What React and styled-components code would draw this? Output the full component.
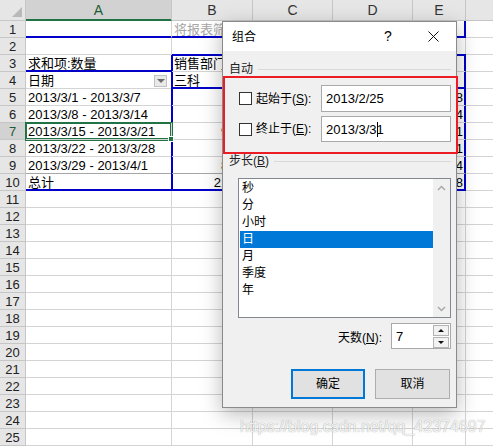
import React from 'react';
import styled, { createGlobalStyle } from 'styled-components';

const BLUE = '#0000c8';
const GREEN = '#217346';
const GRID = '#d4d4d4';

const GlobalStyle = createGlobalStyle`
  html, body {
    margin: 0;
    padding: 0;
    background: #fff;
  }
  body {
    font-family: "Liberation Sans", "Noto Sans CJK SC", sans-serif;
  }
`;

const Screen = styled.div`
  position: relative;
  width: 493px;
  height: 448px;
  overflow: hidden;
  background: #fff;
`;

/* ---------- worksheet ---------- */

const Sheet = styled.div`
  display: grid;
  grid-template-columns: 26px 146px 81px 80px 80px 53px 80px;
  grid-template-rows: 21px repeat(25, 17px);
  font-size: 13px;
  color: #000;
`;

const Corner = styled.div`
  position: relative;
  box-sizing: border-box;
  background: #e6e6e6;
  border-right: 1px solid #c6c6c6;
  border-bottom: 1px solid #c6c6c6;

  &::after {
    content: '';
    position: absolute;
    right: 3px;
    bottom: 3px;
    border-left: 10px solid transparent;
    border-bottom: 10px solid #b9b9b9;
  }
`;

const ColHead = styled.div`
  box-sizing: border-box;
  background: ${(p) => (p.$sel ? '#d2d2d2' : '#e6e6e6')};
  border-right: 1px solid #c6c6c6;
  border-bottom: 1px solid ${(p) => (p.$sel ? GREEN : '#c6c6c6')};
  ${(p) => p.$sel && `box-shadow: inset 0 -1px 0 ${GREEN};`}
  color: ${(p) => (p.$sel ? '#1d5d33' : '#333')};
  font-size: 14px;
  line-height: 20px;
  text-align: center;
`;

const RowHead = styled.div`
  box-sizing: border-box;
  background: ${(p) => (p.$sel ? '#d2d2d2' : '#e6e6e6')};
  border-right: 1px solid ${(p) => (p.$sel ? GREEN : '#c6c6c6')};
  border-bottom: 1px solid #c6c6c6;
  color: ${(p) => (p.$sel ? '#1d5d33' : '#222')};
  font-size: 13px;
  line-height: 17px;
  text-align: center;
`;

const edgeShadows = ({ $t, $r, $b, $l, $active }) => {
  const list = [];
  if ($active) list.push(`0 0 0 1px ${GREEN}`, `inset 0 0 0 1px ${GREEN}`);
  if ($t) list.push(`0 -1px 0 ${BLUE}`, `inset 0 1px 0 ${BLUE}`);
  if ($b) list.push(`inset 0 -1px 0 ${BLUE}`);
  if ($l) list.push(`-1px 0 0 ${BLUE}`, `inset 1px 0 0 ${BLUE}`);
  if ($r) list.push(`inset -1px 0 0 ${BLUE}`);
  return list.length ? `box-shadow: ${list.join(', ')};` : '';
};

const Cell = styled.div`
  position: relative;
  box-sizing: border-box;
  display: flex;
  align-items: flex-start;
  justify-content: ${(p) => (p.$num ? 'flex-end' : 'space-between')};
  padding: 0 2px;
  border-right: 1px solid ${(p) => (p.$r ? BLUE : GRID)};
  border-bottom: 1px solid ${(p) => (p.$b ? BLUE : p.$rule ? '#a6a6a6' : GRID)};
  color: ${(p) => (p.$muted ? '#a6a6a6' : '#000')};
  line-height: 17px;
  white-space: nowrap;
  z-index: ${(p) => (p.$active ? 2 : 'auto')};
  ${edgeShadows}
`;

const FilterButton = styled.span`
  box-sizing: border-box;
  width: 13px;
  height: 12px;
  margin-top: 3px;
  margin-right: 2px;
  background: #e9e9e9;
  border: 1px solid #c2c2c2;
  display: flex;
  align-items: center;
  justify-content: center;

  &::after {
    content: '';
    border-left: 4px solid transparent;
    border-right: 4px solid transparent;
    border-top: 4px solid #6d6d6d;
  }
`;

const FillHandle = styled.span`
  position: absolute;
  right: -3px;
  bottom: -3px;
  width: 4px;
  height: 4px;
  background: ${GREEN};
  border: 1px solid #fff;
`;

/* ---------- dialog ---------- */

const Dialog = styled.div`
  position: absolute;
  left: 222px;
  top: 21px;
  width: 235px;
  box-sizing: border-box;
  border: 1px solid #8a8a8a;
  background: #f0f0f0;
  box-shadow: 0 6px 20px rgba(0, 0, 0, 0.28);
  font-size: 12px;
  color: #000;
  z-index: 5;
`;

const TitleBar = styled.div`
  display: flex;
  align-items: center;
  height: 29px;
  padding-left: 9px;
  background: #fff;
`;

const Title = styled.div`
  flex: 1;
  line-height: 14px;
`;

const HelpButton = styled.div`
  width: 30px;
  margin-right: 7px;
  font-size: 14px;
  line-height: 29px;
  text-align: center;
`;

const CloseButton = styled.div`
  width: 46px;
  height: 29px;
  display: flex;
  align-items: center;
  justify-content: center;
`;

const Body = styled.div`
  padding: 11px 5px 8px 6px;
`;

const Heading = styled.div`
  display: flex;
  align-items: center;
  gap: 5px;
  height: 14px;
  line-height: 14px;
  color: #222;

  &::after {
    content: '';
    flex: 1;
    height: 1px;
    background: #d9d9d9;
  }
`;

const Callout = styled.div`
  margin: 0 -7px 0 -6px;
  padding: 7px 5px 10px 14px;
  border: 2px solid #ec1c24;
  display: flex;
  flex-direction: column;
  gap: 4px;
`;

const FieldRow = styled.div`
  display: flex;
  align-items: center;
`;

const CheckLabel = styled.label`
  flex: 1;
  display: flex;
  align-items: center;
  gap: 4px;
  line-height: 14px;
`;

const CheckBox = styled.span`
  box-sizing: border-box;
  width: 13px;
  height: 13px;
  border: 1px solid #333;
  background: #fff;
`;

const TextBox = styled.div`
  box-sizing: border-box;
  width: 130px;
  height: ${(p) => p.$h}px;
  padding-left: 4px;
  border: 1px solid #a9a9a9;
  background: #fff;
  display: flex;
  align-items: center;
  font-size: 13px;
`;

const Caret = styled.span`
  display: inline-block;
  width: 1px;
  height: 15px;
  margin: 0 -1px 0 0;
  background: #000;
`;

const ListBox = styled.div`
  margin: 10px 0 0 9px;
  height: 140px;
  box-sizing: border-box;
  border: 1px solid #828790;
  background: #fff;
  display: flex;
`;

const Options = styled.div`
  flex: 1;
  padding: 1px 0 0 1px;
`;

const Option = styled.div`
  height: 17px;
  line-height: 17px;
  padding-left: 2px;
  background: ${(p) => (p.$sel ? '#0078d7' : 'transparent')};
  color: ${(p) => (p.$sel ? '#fff' : '#000')};
`;

const ScrollTrack = styled.div`
  width: 17px;
  background: #f0f0f0;
  display: flex;
  flex-direction: column;
  justify-content: space-between;
`;

const ScrollArrow = styled.div`
  height: 17px;
  display: flex;
  align-items: center;
  justify-content: center;
`;

const DaysRow = styled.div`
  margin-top: 5px;
  display: flex;
  align-items: center;
  justify-content: flex-end;
  gap: 9px;
`;

const SpinBox = styled.div`
  box-sizing: border-box;
  width: 60px;
  height: 26px;
  border: 1px solid #a9a9a9;
  background: #fff;
  display: flex;
  align-items: center;
  justify-content: space-between;
  padding: 0 1px 0 4px;
  font-size: 13px;
`;

const SpinButtons = styled.div`
  display: flex;
  flex-direction: column;
  gap: 1px;
`;

const SpinButton = styled.div`
  box-sizing: border-box;
  width: 16px;
  height: 11px;
  border: 1px solid #b4b4b4;
  background: #f2f2f2;
  display: flex;
  align-items: center;
  justify-content: center;

  &::after {
    content: '';
    border-left: 3px solid transparent;
    border-right: 3px solid transparent;
    ${(p) => (p.$down ? 'border-top: 3px solid #111;' : 'border-bottom: 3px solid #111;')}
  }
`;

const ButtonRow = styled.div`
  margin: 20px 1px 0 0;
  display: flex;
  justify-content: flex-end;
  gap: 10px;
`;

const Button = styled.div`
  box-sizing: border-box;
  width: ${(p) => (p.$primary ? 74 : 75)}px;
  height: 30px;
  border: ${(p) => (p.$primary ? '2px solid #0078d7' : '1px solid #adadad')};
  background: #e1e1e1;
  display: flex;
  align-items: center;
  justify-content: center;
  line-height: 14px;
`;

const Watermark = styled.div`
  position: absolute;
  left: 240px;
  top: 418px;
  font-size: 16px;
  line-height: 18px;
  color: rgba(255, 255, 255, 0.9);
  text-shadow: 0 0 1px rgba(0, 0, 0, 0.45);
  white-space: nowrap;
  z-index: 6;
`;

/* ---------- data ---------- */

const COLS = ['A', 'B', 'C', 'D', 'E', ''];

const text = {
  '1-1': '将报表筛选字段拖至此处',
  '3-0': '求和项:数量',
  '3-1': '销售部门',
  '4-0': '日期',
  '4-1': '三科',
  '4-2': '四科',
  '4-3': '五科',
  '4-4': '总计',
  '5-0': '2013/3/1 - 2013/3/7',
  '6-0': '2013/3/8 - 2013/3/14',
  '7-0': '2013/3/15 - 2013/3/21',
  '8-0': '2013/3/22 - 2013/3/28',
  '9-0': '2013/3/29 - 2013/4/1',
  '10-0': '总计',
};

const numbers = {
  5: ['986', '210', '312', '1508'],
  6: ['975', '205', '294', '1474'],
  7: ['9512', '1320', '1269', '12101'],
  8: ['968', '188', '205', '1361'],
  9: ['8900', '1450', '1304', '11654'],
  10: ['21341', '3373', '3384', '28098'],
};

const edgesFor = (r, c) => {
  const e = {};
  if (r === 1 && c <= 4) e.$b = true;
  if ((r === 1 || (r >= 3 && r <= 10)) && c === 4) e.$r = true;
  if (r === 3 && c === 0) e.$b = true;
  if (r === 3 && c >= 1 && c <= 4) e.$t = true;
  if (r >= 3 && r <= 10 && c === 1) e.$l = true;
  if (r === 4 && c >= 1 && c <= 4) e.$b = true;
  if (r === 10 && c <= 4) e.$b = true;
  if (r === 9 && c <= 4) e.$rule = true;
  return e;
};

const steps = ['秒', '分', '小时', '日', '月', '季度', '年'];

const ChevronUp = () => (
  <svg width="9" height="6" viewBox="0 0 9 6">
    <path d="M1 5 L4.5 1.5 L8 5" fill="none" stroke="#a6a6a6" strokeWidth="1.4" />
  </svg>
);

const ChevronDown = () => (
  <svg width="9" height="6" viewBox="0 0 9 6">
    <path d="M1 1 L4.5 4.5 L8 1" fill="none" stroke="#a6a6a6" strokeWidth="1.4" />
  </svg>
);

const Worksheet = () => (
  <Sheet>
    <Corner />
    {COLS.map((c, i) => (
      <ColHead key={i} $sel={c === 'A'}>
        {c}
      </ColHead>
    ))}
    {Array.from({ length: 25 }, (_, i) => i + 1).map((r) => (
      <React.Fragment key={r}>
        <RowHead $sel={r === 7}>{r}</RowHead>
        {COLS.map((_, c) => {
          const num = numbers[r] && c >= 1 && c <= 4 ? numbers[r][c - 1] : null;
          const active = r === 7 && c === 0;
          return (
            <Cell
              key={c}
              {...edgesFor(r, c)}
              $num={!!num}
              $muted={r === 1}
              $active={active}
            >
              {num || text[`${r}-${c}`] || ''}
              {r === 4 && c === 0 && <FilterButton />}
              {active && <FillHandle />}
            </Cell>
          );
        })}
      </React.Fragment>
    ))}
  </Sheet>
);

const GroupDialog = () => (
  <Dialog>
    <TitleBar>
      <Title>组合</Title>
      <HelpButton>?</HelpButton>
      <CloseButton>
        <svg width="11" height="11" viewBox="0 0 11 11">
          <path d="M0.5 0.5 L10.5 10.5 M10.5 0.5 L0.5 10.5" stroke="#111" strokeWidth="1" />
        </svg>
      </CloseButton>
    </TitleBar>
    <Body>
      <Heading>自动</Heading>
      <Callout>
        <FieldRow>
          <CheckLabel>
            <CheckBox />
            <span>
              起始于(<u>S</u>):
            </span>
          </CheckLabel>
          <TextBox $h={27}>2013/2/25</TextBox>
        </FieldRow>
        <FieldRow>
          <CheckLabel>
            <CheckBox />
            <span>
              终止于(<u>E</u>):
            </span>
          </CheckLabel>
          <TextBox $h={26}>
            2013/3/3
            <Caret />1
          </TextBox>
        </FieldRow>
      </Callout>
      <Heading>
        <span>
          步长(<u>B</u>)
        </span>
      </Heading>
      <ListBox>
        <Options>
          {steps.map((s) => (
            <Option key={s} $sel={s === '日'}>
              {s}
            </Option>
          ))}
        </Options>
        <ScrollTrack>
          <ScrollArrow>
            <ChevronUp />
          </ScrollArrow>
          <ScrollArrow>
            <ChevronDown />
          </ScrollArrow>
        </ScrollTrack>
      </ListBox>
      <DaysRow>
        <span>
          天数(<u>N</u>):
        </span>
        <SpinBox>
          7
          <SpinButtons>
            <SpinButton />
            <SpinButton $down />
          </SpinButtons>
        </SpinBox>
      </DaysRow>
      <ButtonRow>
        <Button $primary>确定</Button>
        <Button>取消</Button>
      </ButtonRow>
    </Body>
  </Dialog>
);

export default function App() {
  return (
    <Screen>
      <GlobalStyle />
      <Worksheet />
      <GroupDialog />
      <Watermark>https://blog.csdn.net/qq_42374697</Watermark>
    </Screen>
  );
}
